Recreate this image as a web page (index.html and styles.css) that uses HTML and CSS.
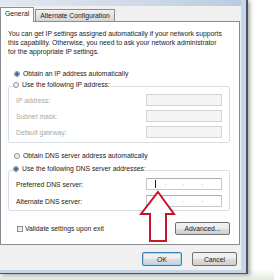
FILE: index.html
```html
<!DOCTYPE html>
<html lang="en">
<head>
    <meta charset="UTF-8">
    <meta name="viewport" content="width=device-width, initial-scale=1.0">
    <title>Internet Protocol Version 4 (TCP/IPv4) Properties</title>
    <link rel="stylesheet" href="styles.css">
</head>
<body>
    <div class="window">
        <div class="frame-top"></div>
        <div class="client">
            <div class="tabs">
                <div class="tab active">General</div>
                <div class="tab">Alternate Configuration</div>
            </div>
            <div class="panel">
                <p class="intro">You can get IP settings assigned automatically if your network supports<br>this capability. Otherwise, you need to ask your network administrator<br>for the appropriate IP settings.</p>

                <div class="option first"><span class="radio checked"></span>Obtain an IP address automatically</div>
                <fieldset class="group disabled">
                    <legend><span class="option"><span class="radio"></span>Use the following IP address:</span></legend>
                    <div class="row"><span class="label">IP address:</span><span class="ip"><span class="seg"></span><span class="seg"></span><span class="seg"></span><span class="seg"></span></span></div>
                    <div class="row"><span class="label">Subnet mask:</span><span class="ip"><span class="seg"></span><span class="seg"></span><span class="seg"></span><span class="seg"></span></span></div>
                    <div class="row"><span class="label">Default gateway:</span><span class="ip"><span class="seg"></span><span class="seg"></span><span class="seg"></span><span class="seg"></span></span></div>
                </fieldset>

                <div class="option second"><span class="radio"></span>Obtain DNS server address automatically</div>
                <fieldset class="group dns">
                    <legend><span class="option"><span class="radio checked"></span>Use the following DNS server addresses:</span></legend>
                    <div class="row"><span class="label">Preferred DNS server:</span><span class="ip"><span class="seg"><span class="caret"></span></span><span class="seg"></span><span class="seg"></span><span class="seg"></span></span></div>
                    <div class="row"><span class="label">Alternate DNS server:</span><span class="ip"><span class="seg"></span><span class="seg"></span><span class="seg"></span><span class="seg"></span></span></div>
                </fieldset>

                <div class="bottom-row">
                    <div class="check-option"><span class="checkbox"></span>Validate settings upon exit</div>
                    <button class="btn advanced">Advanced...</button>
                </div>
            </div>
            <div class="actions">
                <button class="btn ok">OK</button>
                <button class="btn cancel">Cancel</button>
            </div>
        </div>
    </div>

    <svg class="arrow" width="274" height="280" viewBox="0 0 274 280">
        <path d="M158 192 L174 214 L166 214 L166 241 L150 241 L150 214 L141 214 Z" fill="#fff" stroke="#c8142a" stroke-width="2" stroke-linejoin="miter"/>
    </svg>
</body>
</html>
```

FILE: styles.css
```css
* {
    box-sizing: border-box;
}
body {
    margin: 0;
    height: 280px;
    overflow: hidden;
    position: relative;
    background: linear-gradient(to bottom, #ffffff 0%, #ffffff 96%, #e4e9de 100%);
    font-family: "Liberation Sans", Arial, sans-serif;
    font-size: 6.8px;
    color: #222;
}
.window {
    width: 248px;
    height: 274px;
    display: flex;
    flex-direction: column;
    padding: 0 5px 3px 0;
    background: #c5d6ea;
    border-right: 2px solid #4b5360;
    border-bottom: 1px solid #4b5360;
    box-shadow: 2px 1px 4px rgba(0, 0, 0, 0.35);
}
.frame-top {
    height: 6px;
    background: linear-gradient(to right, #e2e8ef, #cdd9e6 60%, #b9cce0);
}
.client {
    flex: 1;
    display: flex;
    flex-direction: column;
    padding: 1px 1px 0 0;
    background: #f0f0f0;
}
.tabs {
    display: flex;
    align-items: flex-end;
    height: 15px;
    margin-bottom: -1px;
    position: relative;
    z-index: 1;
}
.tab {
    height: 12px;
    margin-bottom: 1px;
    padding: 0 4px;
    line-height: 11px;
    border: 1px solid #898c95;
    border-bottom: none;
    border-radius: 1px 1px 0 0;
    background: linear-gradient(to bottom, #f2f2f2, #e3e3e3 50%, #d7d7d7);
    white-space: nowrap;
}
.tab.active {
    height: 15px;
    margin-bottom: 0;
    margin-right: 1px;
    padding: 0 4px;
    line-height: 12px;
    background: #fff;
}
.panel {
    height: 224px;
    padding: 0 9px 0 7px;
    background: #fff;
    border: 1px solid #898c95;
}
.intro {
    margin: 7px 0 0;
    line-height: 9px;
    white-space: nowrap;
}
.option {
    display: flex;
    align-items: center;
    height: 9px;
    white-space: nowrap;
}
.option.first {
    margin: 13px 0 0 6px;
}
.option.second {
    margin: 8px 0 0 6px;
}
.radio {
    width: 6px;
    height: 6px;
    margin-right: 3px;
    border: 1px solid #8f8f8f;
    border-radius: 50%;
    background: radial-gradient(circle, #e9e9e9, #fdfdfd);
    flex-shrink: 0;
}
.radio.checked {
    background: radial-gradient(circle, #25527c 0, #4a87c2 1.6px, #f4f4f4 2.2px);
}
.group {
    margin: 2px 0 0;
    padding: 0 0 4px 7px;
    border: 1px solid #d5dfe5;
    border-radius: 2px;
    min-width: 0;
}
.group legend {
    margin-left: -3px;
    padding: 0 1px 4px 0;
}
.group.dns {
    margin-top: 4px;
    padding-bottom: 3px;
}
.row {
    display: flex;
    align-items: center;
    justify-content: space-between;
    height: 12px;
    margin: 4px 7px 0 0;
}
.row:first-of-type {
    margin-top: 1px;
}
.dns .row {
    margin-top: 5px;
}
.dns .row:first-of-type {
    margin-top: 1px;
}
.label {
    white-space: nowrap;
}
.disabled .label {
    color: #a9a9a9;
}
.ip {
    display: flex;
    width: 76px;
    height: 12px;
    border: 1px solid #c3c9cf;
    border-top-color: #abadb3;
    background: #fff;
}
.disabled .ip {
    background: #f4f4f4;
    border-color: #d4d4d4;
}
.seg {
    flex: 1;
    display: flex;
    align-items: center;
    justify-content: center;
    position: relative;
}
.seg + .seg::before {
    content: ".";
    position: absolute;
    left: -1px;
    top: 1px;
    font-size: 6px;
    color: #666;
}
.disabled .seg + .seg::before {
    color: #999;
}
.caret {
    width: 1px;
    height: 8px;
    margin-left: -1px;
    background: #222;
}
.bottom-row {
    display: flex;
    align-items: center;
    justify-content: space-between;
    height: 13px;
    margin-top: 11px;
}
.check-option {
    display: flex;
    align-items: center;
    margin-left: 9px;
    white-space: nowrap;
}
.checkbox {
    width: 6px;
    height: 6px;
    margin-right: 2px;
    border: 1px solid #8f8f8f;
    background: linear-gradient(to bottom right, #dcdcdc, #fbfbfb);
}
.btn {
    height: 13px;
    padding: 0;
    font-family: inherit;
    font-size: 6.8px;
    color: #222;
    border: 1px solid #707070;
    border-radius: 2px;
    background: linear-gradient(to bottom, #f2f2f2, #ebebeb 50%, #dddddd 51%, #cfcfcf);
}
.btn.advanced {
    width: 55px;
}
.actions {
    display: flex;
    justify-content: flex-end;
    gap: 10px;
    padding: 7px 3px 0 0;
}
.actions .btn {
    height: 14px;
}
.btn.ok {
    width: 40px;
    border-color: #3c7fb1;
    box-shadow: inset 0 0 0 1px #9fd8f4;
}
.btn.cancel {
    width: 45px;
}
.arrow {
    position: absolute;
    left: 0;
    top: 0;
    pointer-events: none;
}
```
